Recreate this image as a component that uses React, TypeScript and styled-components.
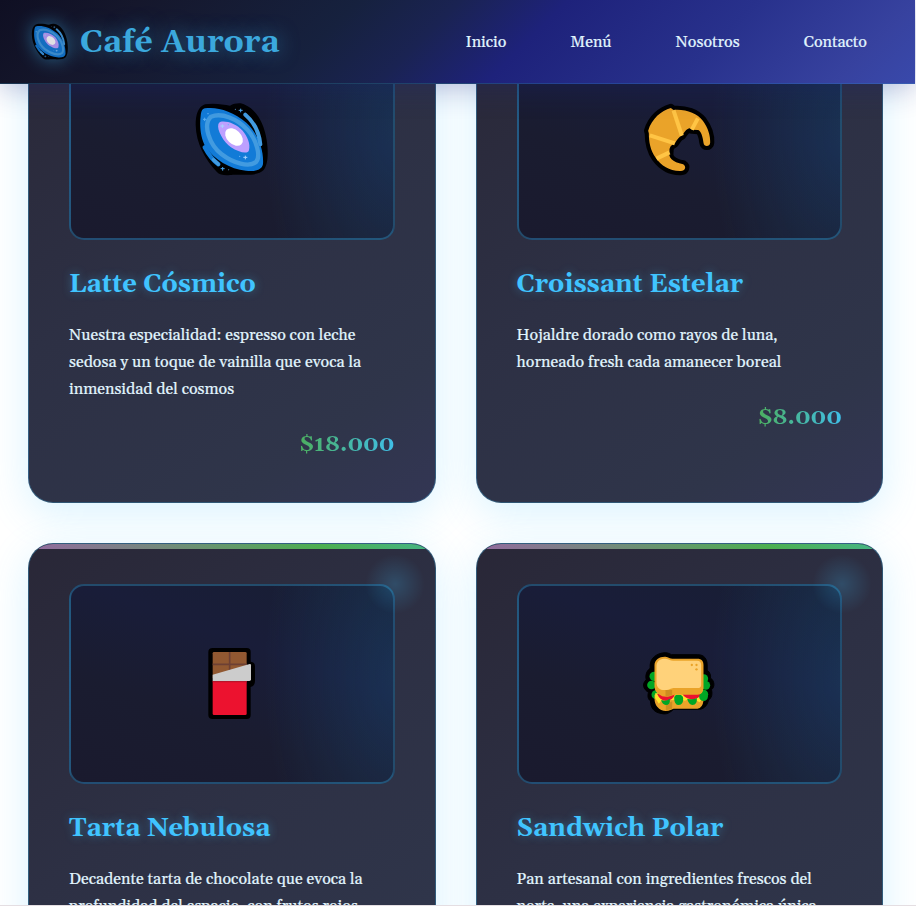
import React from "react";
import styled, { createGlobalStyle } from "styled-components";

const GlobalStyle = createGlobalStyle`
  *, *::before, *::after { box-sizing: border-box; }
  html, body { margin: 0; padding: 0; background: #fff; overflow: hidden; }
  body {
    font-family: Gelasio, Georgia, "Liberation Serif", serif;
    font-size: 16px;
    line-height: 1.7;
    color: #e1f5fe;
  }
  h3, p { margin: 0; }
`;

const Page = styled.div`
  position: relative;
  height: 906px;
  padding-right: 1px;
  overflow: hidden;
  border-bottom: 1px solid #e4dee2;
  background: #fff;
`;

const Header = styled.header`
  position: relative;
  z-index: 2;
  display: flex;
  align-items: center;
  justify-content: space-between;
  height: 84px;
  padding: 0 32px 0 30px;
  border-bottom: 1px solid rgba(64, 196, 255, 0.2);
  background: linear-gradient(135deg, #0f0f23 0%, #15172c 14%, #16213e 36%, #1a2352 46%, #1e227b 57%, #28318c 76%, #37429f 92%, #3949ab 100%);
  box-shadow: 0 4px 30px rgba(26, 35, 126, 0.3);
`;

const Brand = styled.div`
  display: flex;
  align-items: center;
  gap: 10px;
  font-size: 32px;
  font-weight: 700;
  line-height: 54px;
  color: #3ba8dd;
  text-shadow: 0 0 20px rgba(64, 196, 255, 0.5);
  svg { opacity: 0.87; filter: drop-shadow(0 0 9px rgba(64, 196, 255, 0.5)); }
  span { padding-top: 2px; }
`;

const Nav = styled.nav`
  display: flex;
  gap: 32px;
`;

const NavLink = styled.a`
  padding: 10px 16px 8px;
  color: #e1f5fe;
  text-decoration: none;
  -webkit-text-stroke: 0.2px #e1f5fe;
`;

const MenuGrid = styled.main`
  display: grid;
  grid-template-columns: repeat(2, minmax(0, 1fr));
  gap: 40px;
  margin: -85px 32px 0 28px;
`;

const Card = styled.article`
  position: relative;
  height: 504px;
  padding: 40px;
  overflow: hidden;
  border: 1px solid rgba(64, 196, 255, 0.3);
  border-radius: 25px;
  background: linear-gradient(145deg, #292737 0%, #2d3044 45%, #2f354a 82%, #333654 100%);
  box-shadow: 0 10px 40px rgba(64, 196, 255, 0.2);

  &::before {
    content: "";
    position: absolute;
    inset: 0 0 auto;
    height: 5px;
    background: linear-gradient(90deg, #936a9f 0%, #4caf50 72%, #46b586 100%);
  }

  &::after {
    content: "";
    position: absolute;
    top: 10px;
    right: 10px;
    width: 60px;
    height: 60px;
    border-radius: 50%;
    background: radial-gradient(circle, rgba(64, 196, 255, 0.2) 0%, transparent 70%);
  }
`;

const Picture = styled.div`
  display: flex;
  align-items: center;
  justify-content: center;
  height: 200px;
  margin-bottom: 23px;
  border: 2px solid rgba(56, 180, 240, 0.32);
  border-radius: 15px;
  background:
    radial-gradient(ellipse 42% 130% at 102% 45%, rgba(30, 115, 175, 0.23), transparent 100%),
    linear-gradient(20deg, #1a1a2e 0%, #1a1c30 35%, #191d39 65%, #181e33 100%);
`;

const CardTitle = styled.h3`
  margin-bottom: 15px;
  font-size: 25.6px;
  font-weight: 700;
  line-height: 43.5px;
  color: #40c4ff;
  text-shadow: 0 0 10px rgba(64, 196, 255, 0.4);
`;

const Description = styled.p`
  margin-bottom: 21px;
  line-height: 27px;
  white-space: pre-line;
  -webkit-text-stroke: 0.2px #e1f5fe;
`;

const PriceRow = styled.div`
  display: flex;
  justify-content: flex-end;
`;

const Price = styled.span`
  font-size: 22.4px;
  font-weight: 700;
  line-height: 41px;
  font-variant-numeric: oldstyle-nums;
  color: transparent;
  background: linear-gradient(90deg, #4caf60, #40bfe8);
  background-clip: text;
  -webkit-background-clip: text;
`;

const Galaxy = ({ size = 80 }: { size?: number }) => (
  <svg width={size} height={size} viewBox="36 30 240 240">
    <path d="M75 43C100 38 130 43 150 47C165 39 184 37 196 45C225 57 252 95 260 150C266 190 264 225 250 241C240 252 215 256 180 254L158 254C145 256 120 258 110 245C76 210 48 160 47 105C47 75 54 50 75 43Z" fill="#000" />
    <path d="M75 55C110 49 158 63 199 98C234 130 252 180 249 222C247 239 225 246 198 242C150 237 102 209 77 170C62 147 58 107 62 78C64 62 67 57 75 55Z" fill="#127bd7" />
    <path d="M93 80C125 67 172 86 202 119C231 151 243 199 228 216C207 233 160 220 125 193C88 164 67 104 93 80Z" fill="none" stroke="#429be0" strokeWidth="13" />
    <path d="M122 95C139 91 170 101 188 122C202 139 212 162 207 180C205 194 177 188 153 172C130 157 110 119 115 103Q116 97 122 95Z" fill="#bda0ff" />
    <ellipse cx="162" cy="141" rx="31" ry="21" transform="rotate(44 162 141)" fill="#fff" />
    <path d="M196 74C222 96 237 124 241 163" fill="none" stroke="#429be0" strokeWidth="12" strokeLinecap="round" />
    <path d="M115 223Q92 206 74 172" fill="none" stroke="#127bd7" strokeWidth="13" strokeLinecap="round" />
    <path d="M115 223L100 209" stroke="#429be0" strokeWidth="10" strokeLinecap="round" />
    <g fill="none" strokeWidth="3">
      <path d="M182 56v11M176 61h12M128 231v11M122 236h12" stroke="#4aa5ee" />
      <path d="M127 103v11M121 108h12M196 197v11M190 202h12" stroke="#a9d5ff" />
      <path d="M74 83v10M69 88h10" stroke="#5eb0f0" />
    </g>
    <g fill="#6eb7f5"><circle cx="84" cy="71" r="2" /><circle cx="179" cy="199" r="2" /><circle cx="145" cy="104" r="2" /><circle cx="166" cy="58" r="1.5" /><circle cx="146" cy="239" r="1.5" /></g>
  </svg>
);

const Croissant = () => (
  <svg width="80" height="80" viewBox="28.5 30 240 240">
    <path d="M56 122C67 86 95 62 124 54L132 60C170 57 202 70 220 92C236 113 243 138 242 158C241 171 223 171 222 158C220 140 214 122 206 120L187 119Q178 105 157 137Q147 140 136 160Q118 168 120 184C115 202 128 217 161 223C172 230 167 243 154 243C120 244 96 227 79 204C62 181 58 155 58 130Z" fill="#eaa329" stroke="#000" strokeWidth="25" strokeLinejoin="round" paintOrder="stroke" />
    <g stroke="#ffc545" strokeWidth="12" fill="none">
      <path d="M132 61L157 137" />
      <path d="M61 136L136 160" />
      <path d="M205 85L187 119" />
      <path d="M81 206L120 187" />
    </g>
  </svg>
);

const Chocolate = () => (
  <svg width="80" height="80" viewBox="6 27 240 240">
    <path d="M68 39H170Q182 39 182 50V80Q195 81 195 94V137Q195 153 182 156V240Q182 252 170 252H68Q55 252 55 240V51Q55 39 68 39Z" fill="#000" />
    <path d="M72 51H166Q170 51 170 55V110L68 130V55Q68 51 72 51Z" fill="#915831" />
    <path d="M119 51V115M68 88H170" stroke="#6d4034" strokeWidth="5" />
    <path d="M68 137H170V236Q170 240 166 240H72Q68 240 68 236Z" fill="#ec122f" />
    <path d="M68 138H170V142H68Z" fill="#b9152b" />
    <path d="M68 119L179 87Q183 86 183 91V133Q183 138 178 138H68Z" fill="#ccc" />
  </svg>
);

const Sandwich = () => (
  <svg width="80" height="80" viewBox="28.5 12 240 240">
    <path d="M107 38C115 38 121 42 126 44H205C224 44 233 57 233 75V91C242 96 244 108 243 114C255 122 257 141 246 149C249 162 247 174 237 180C233 199 221 209 205 208H132C121 218 112 224 98 221C74 218 63 204 63 183C55 177 54 168 57 157C42 148 36 133 50 119C47 104 52 92 62 85V75C63 54 82 39 107 38Z" fill="#000" stroke="#000" strokeWidth="3" />
    <g fill="#00a625">
      <circle cx="74" cy="109" r="14" /><circle cx="66" cy="135" r="13" /><circle cx="79" cy="164" r="13" />
      <circle cx="223" cy="116" r="13" /><circle cx="229" cy="136" r="13" /><circle cx="222" cy="163" r="14" />
    </g>
    <path d="M75 164H222V182Q219 204 204 206H132L125 209Q101 220 83 200Q75 191 75 174Z" fill="#eaa329" />
    <path d="M109 194L128 184V207L109 211Z" fill="#cd8d20" />
    <path d="M77 174L88 191L103 173L128 181L147 174L166 182L187 173L210 187L222 172V160H77Z" fill="#ffe52b" />
    <path d="M83 162H219Q205 178 187 178Q168 177 158 162H137Q129 184 107 182Q91 180 83 162Z" fill="#ec122f" />
    <g fill="#00a625">
      <path d="M95 180Q109 186 121 176Q123 195 109 195Q98 194 95 180Z" />
      <path d="M134 173Q135 163 147 164Q160 163 161 175Q162 195 148 195Q134 195 134 173Z" />
      <path d="M173 176Q188 181 202 174Q204 194 189 195Q177 194 173 176Z" />
      <circle cx="222" cy="170" r="13" />
    </g>
    <path d="M75 76C75 58 91 49 108 50C117 51 122 56 129 56H203C217 56 222 63 222 76V145Q221 164 204 164H136L121 169Q102 174 88 163Q75 155 75 139Z" fill="#eaa329" />
    <path d="M108 150H128V165L108 170Z" fill="#cd8d20" />
    <path d="M81 77C82 61 94 56 108 56C119 57 123 62 131 62H202Q215 62 215 75V134Q215 144 204 144H132C123 145 121 150 108 150C91 151 82 143 81 128Z" fill="#ffd27a" />
    <g fill="#eaa329"><circle cx="187" cy="75" r="3.5" /><circle cx="201" cy="75" r="3.5" /><circle cx="201" cy="88" r="3.5" /></g>
  </svg>
);

const products = [
  { name: "Latte Cósmico", text: "Nuestra especialidad: espresso con leche\nsedosa y un toque de vainilla que evoca la\ninmensidad del cosmos", price: "$18.000", Icon: Galaxy },
  { name: "Croissant Estelar", text: "Hojaldre dorado como rayos de luna,\nhorneado fresh cada amanecer boreal", price: "$8.000", Icon: Croissant },
  { name: "Tarta Nebulosa", text: "Decadente tarta de chocolate que evoca la\nprofundidad del espacio, con frutos rojos", Icon: Chocolate },
  { name: "Sandwich Polar", text: "Pan artesanal con ingredientes frescos del\nnorte, una experiencia gastronómica única", Icon: Sandwich },
];

export default function App() {
  return (
    <Page>
      <GlobalStyle />
      <Header>
        <Brand>
          <Galaxy size={40} />
          <span>Café Aurora</span>
        </Brand>
        <Nav>
          {["Inicio", "Menú", "Nosotros", "Contacto"].map((label) => (
            <NavLink key={label}>{label}</NavLink>
          ))}
        </Nav>
      </Header>
      <MenuGrid>
        {products.map(({ name, text, price, Icon }) => (
          <Card key={name}>
            <Picture><Icon /></Picture>
            <CardTitle>{name}</CardTitle>
            <Description>{text}</Description>
            {price && <PriceRow><Price>{price}</Price></PriceRow>}
          </Card>
        ))}
      </MenuGrid>
    </Page>
  );
}
